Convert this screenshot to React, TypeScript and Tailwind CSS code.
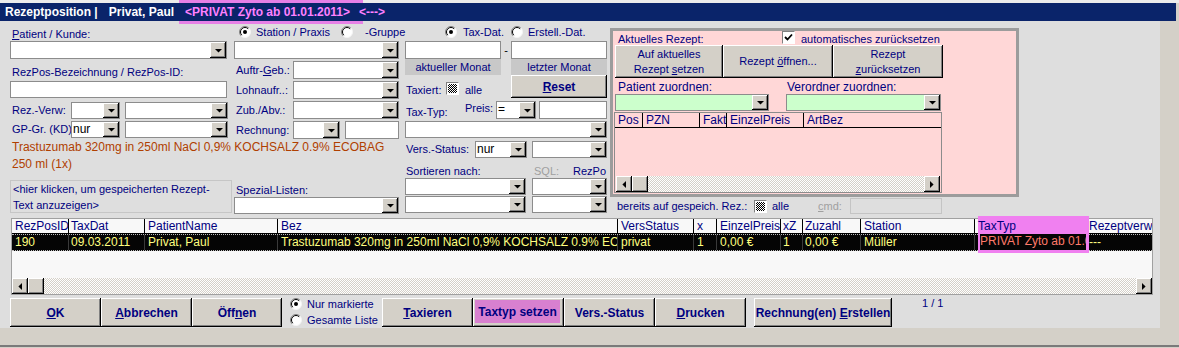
import React from 'react';

const RAISED =
  'bg-[#d4d0c8] shadow-[inset_-1px_-1px_0_#000,inset_1px_1px_0_#fff,inset_-2px_-2px_0_#808080]';
const L = 'text-[11px] leading-[13px] text-[#000080] whitespace-nowrap';

function Tri({ dir = 'down' }: { dir?: 'down' | 'left' | 'right' }) {
  if (dir === 'down')
    return (
      <svg width="7" height="4" viewBox="0 0 7 4">
        <path d="M0 0H7L3.5 3.6Z" fill="#000" />
      </svg>
    );
  if (dir === 'left')
    return (
      <svg width="4" height="7" viewBox="0 0 4 7">
        <path d="M4 0V7L0.4 3.5Z" fill="#000" />
      </svg>
    );
  return (
    <svg width="4" height="7" viewBox="0 0 4 7">
      <path d="M0 0V7L3.6 3.5Z" fill="#000" />
    </svg>
  );
}

function Combo({ cls, value, bg = 'bg-white' }: { cls: string; value?: string; bg?: string }) {
  return (
    <div className={`${cls} ${bg} shrink-0 flex border border-[#8c8c8c]`}>
      <div className="flex-1 min-w-0 overflow-hidden whitespace-nowrap text-[12px] leading-[15px] text-black pl-[1px]">
        {value}
      </div>
      <div className={`w-[16px] h-full shrink-0 flex items-center justify-center pt-[1px] ${RAISED}`}>
        <Tri />
      </div>
    </div>
  );
}

function Input({ cls }: { cls: string }) {
  return <div className={`${cls} shrink-0 bg-white border border-[#8c8c8c]`} />;
}

function Radio({ checked }: { checked?: boolean }) {
  return (
    <svg width="12" height="12" viewBox="0 0 12 12" className="shrink-0">
      <circle cx="6" cy="6" r="5.5" fill="#fff" />
      <path d="M2.1 9.9A5.5 5.5 0 0 1 9.9 2.1" fill="none" stroke="#808080" strokeWidth="1" />
      <path d="M2.8 9.2A4.5 4.5 0 0 1 9.2 2.8" fill="none" stroke="#000" strokeWidth="1" />
      <path d="M9.9 2.1A5.5 5.5 0 0 1 2.1 9.9" fill="none" stroke="#f4f4f4" strokeWidth="1" />
      {checked && <circle cx="6" cy="6" r="2" fill="#000" />}
    </svg>
  );
}

function Dither() {
  return (
    <div className="w-[13px] h-[13px] shrink-0 border border-[#808080] border-r-white border-b-white bg-white p-[1px]">
      <div className="w-full h-full bg-[repeating-conic-gradient(#000_0%_25%,#fff_0%_50%)] bg-[length:2px_2px]" />
    </div>
  );
}

function Checked() {
  return (
    <div className="w-[13px] h-[13px] shrink-0 border border-[#808080] border-r-white border-b-white bg-white flex items-center justify-center">
      <svg width="9" height="9" viewBox="0 0 9 9">
        <path d="M1 4L3.5 6.5L8 1.5" fill="none" stroke="#000" strokeWidth="1.8" />
      </svg>
    </div>
  );
}

function Btn({ cls, children }: { cls: string; children: React.ReactNode }) {
  return (
    <div className={`${cls} shrink-0 flex items-center justify-center text-center text-[#000080] ${RAISED}`}>
      {children}
    </div>
  );
}

function HScroll({ cls }: { cls: string }) {
  return (
    <div className={`${cls} flex h-[16px] bg-[repeating-conic-gradient(#d4d0c8_0%_25%,#ffffff_0%_50%)] bg-[length:2px_2px]`}>
      <div className={`w-[16px] h-full flex items-center justify-center ${RAISED}`}>
        <Tri dir="left" />
      </div>
      <div className={`w-[16px] h-full ${RAISED}`} />
      <div className="flex-1" />
      <div className={`w-[16px] h-full flex items-center justify-center ${RAISED}`}>
        <Tri dir="right" />
      </div>
    </div>
  );
}

const gridCols = [
  { h: 'RezPosID', w: 'w-[57px] pl-[3px]', v: '190' },
  { h: 'TaxDat', w: 'w-[76px] pl-[2px]', v: '09.03.2011' },
  { h: 'PatientName', w: 'w-[133px] pl-[3px]', v: 'Privat, Paul' },
  { h: 'Bez', w: 'w-[340px] pl-[3px]', v: 'Trastuzumab 320mg in 250ml NaCl 0,9% KOCHSALZ 0.9% ECOBAG 250 ml (1x)' },
  { h: 'VersStatus', w: 'w-[76px] pl-[3px]', v: 'privat' },
  { h: 'x', w: 'w-[23px] pl-[3px]', v: '1' },
  { h: 'EinzelPreis', w: 'w-[64px] pl-[3px]', v: '0,00 €' },
  { h: 'xZ', w: 'w-[22px] pl-[2px]', v: '1' },
  { h: 'Zuzahl', w: 'w-[58px] pl-[2px]', v: '0,00 €' },
  { h: 'Station', w: 'w-[114px] pl-[3px]', v: 'Müller' },
  { h: '', w: 'w-[113px]', v: '' },
  { h: 'Rezeptverweis', w: 'flex-1 pl-[1px]', v: '---' },
];

export default function App() {
  return (
    <div className="relative w-[1179px] h-[348px] overflow-hidden bg-[#d4d0c8] font-['Liberation_Sans',Arial,sans-serif]">
      {/* title highlight */}
      <div className="absolute left-[179px] top-0 w-[184px] h-[24px] bg-[#e680e6] z-[1]" />
      <div className="h-[3px] bg-[#ececec]" />
      <div className="relative z-[2] h-[18px] w-[1176px] bg-[#0a246a] flex items-center text-[12px] leading-[18px] font-bold whitespace-nowrap">
        <span className="ml-[5px] text-white">Rezeptposition |</span>
        <span className="ml-[11px] text-white">Privat, Paul</span>
        <span className="ml-[11px] text-[#ff80ff]">&lt;PRIVAT Zyto ab 01.01.2011&gt;</span>
        <span className="ml-[9px] text-[#ff80ff]">&lt;---&gt;</span>
      </div>

      <div className="flex h-[307px]">
        <div className="w-[1160px] bg-[#dedede] flex flex-col pt-[5px]">
          {/* top section */}
          <div className="h-[192px] flex">
            {/* left section */}
            <div className="ml-[10px] w-[389px] flex flex-col">
              <div className="flex">
                {/* col A */}
                <div className="w-[218px] flex flex-col">
                  <div className={`h-[15px] pt-[2px] pl-[2px] ${L}`}>
                    <u>P</u>atient / Kunde:
                  </div>
                  <Combo cls="w-[217px] h-[18px]" />
                  <div className={`h-[22px] pt-[7px] pl-[2px] ${L}`}>RezPos-Bezeichnung / RezPos-ID:</div>
                  <Input cls="w-[217px] h-[17px]" />
                  <div className="mt-[4px] h-[17px] flex items-center">
                    <span className={`w-[61px] pl-[2px] ${L}`}>Rez.-Verw:</span>
                    <Combo cls="w-[49px] h-[17px]" />
                    <Combo cls="ml-[5px] w-[103px] h-[17px]" />
                  </div>
                  <div className="mt-[2px] h-[17px] flex items-center">
                    <span className={`w-[61px] pl-[2px] ${L}`}>GP-Gr. (KD)</span>
                    <Combo cls="w-[49px] h-[17px]" value="nur" />
                    <Combo cls="ml-[5px] w-[103px] h-[17px]" />
                  </div>
                </div>
                {/* col B */}
                <div className="ml-[6px] w-[165px] flex flex-col">
                  <div className="h-[15px] flex items-start pl-[5px]">
                    <Radio checked />
                    <span className={`ml-[5px] ${L}`}>Station / Praxis</span>
                    <span className="ml-[11px]">
                      <Radio />
                    </span>
                    <span className={`ml-[12px] ${L}`}>-Gruppe</span>
                  </div>
                  <Combo cls="w-[165px] h-[18px]" />
                  <div className="mt-[2px] h-[18px] flex items-center">
                    <span className={`w-[59px] pl-[2px] ${L}`}>
                      Auftr-<u>G</u>eb.:
                    </span>
                    <Combo cls="w-[106px] h-[18px]" />
                  </div>
                  <div className="mt-[2px] h-[18px] flex items-center">
                    <span className={`w-[59px] pl-[2px] ${L}`}>Lohnaufr..:</span>
                    <Combo cls="w-[106px] h-[18px]" />
                  </div>
                  <div className="mt-[2px] h-[18px] flex items-center">
                    <span className={`w-[59px] pl-[2px] ${L}`}>Zub./Abv.:</span>
                    <Combo cls="w-[106px] h-[18px]" />
                  </div>
                  <div className="mt-[2px] h-[18px] flex items-center">
                    <span className={`w-[59px] pl-[2px] ${L}`}>Rechnung:</span>
                    <Combo cls="w-[47px] h-[18px]" />
                    <Input cls="ml-[5px] w-[54px] h-[18px]" />
                  </div>
                </div>
              </div>
              <div className="pl-[2px] text-[12px] leading-[17px] text-[#b04000] whitespace-nowrap">
                Trastuzumab 320mg in 250ml NaCl 0,9% KOCHSALZ 0.9% ECOBAG
                <br />
                250 ml (1x)
              </div>
              <div className="mt-[7px] flex">
                <div className="w-[222px] h-[33px] border border-[#c6c6c6] pl-[2px] text-[11px] leading-[16px] text-[#000080] whitespace-nowrap">
                  &lt;hier klicken, um gespeicherten Rezept-
                  <br />
                  Text anzuzeigen&gt;
                </div>
                <div className="ml-[2px] w-[165px] flex flex-col">
                  <div className={`h-[17px] pt-[4px] pl-[2px] ${L}`}>Spezial-Listen:</div>
                  <Combo cls="w-[165px] h-[17px]" />
                </div>
              </div>
            </div>

            {/* col C */}
            <div className="ml-[6px] w-[202px] flex flex-col">
              <div className="h-[15px] flex items-start">
                <div className="w-[106px] pl-[40px] flex items-start">
                  <Radio checked />
                  <span className={`ml-[6px] ${L}`}>Tax-Dat.</span>
                </div>
                <Radio />
                <span className={`ml-[5px] ${L}`}>Erstell.-Dat.</span>
              </div>
              <div className="h-[18px] flex items-center">
                <Input cls="w-[96px] h-[18px]" />
                <span className="w-[10px] text-center text-[11px] text-black">-</span>
                <Input cls="w-[96px] h-[18px]" />
              </div>
              <div className="h-[39px] flex">
                <div className="w-[96px] flex flex-col">
                  <div className="h-[16px] bg-[#c8c8c8] text-center text-[11px] leading-[16px] text-[#000080]">
                    aktueller Monat
                  </div>
                  <div className="mt-[6px] h-[15px] flex items-center">
                    <span className={`w-[41px] pl-[1px] pt-[3px] ${L}`}>Taxiert:</span>
                    <Dither />
                    <span className={`ml-[6px] pt-[3px] ${L}`}>alle</span>
                  </div>
                </div>
                <div className="ml-[10px] w-[96px] flex flex-col">
                  <div className="h-[16px] bg-[#c8c8c8] text-center text-[11px] leading-[16px] text-[#000080]">
                    letzter Monat
                  </div>
                  <Btn cls="w-[96px] h-[23px] text-[12px] font-bold">
                    <span>
                      <u>R</u>eset
                    </span>
                  </Btn>
                </div>
              </div>
              <div className="mt-[3px] h-[18px] flex">
                <div className={`w-[60px] h-full flex items-end pl-[1px] ${L}`}>
                  <span className="pb-[0px]">Tax-Typ:</span>
                </div>
                <div className={`w-[31px] pt-[1px] ${L}`}>Preis:</div>
                <Combo cls="w-[40px] h-[18px]" value="=" />
                <Input cls="ml-[3px] w-[68px] h-[18px]" />
              </div>
              <Combo cls="mt-[2px] w-[202px] h-[17px]" />
              <div className="mt-[3px] h-[17px] flex items-center">
                <span className={`w-[70px] pl-[1px] ${L}`}>Vers.-Status:</span>
                <Combo cls="w-[52px] h-[17px]" value="nur" />
                <Combo cls="ml-[5px] w-[75px] h-[17px]" />
              </div>
              <div className="h-[20px] flex items-end">
                <span className={`w-[129px] pl-[1px] ${L}`}>Sortieren nach:</span>
                <span className="w-[39px] text-[11px] leading-[13px] text-[#a0a0a0]">SQL:</span>
                <span className={L}>RezPo</span>
              </div>
              <div className="h-[17px] flex">
                <Combo cls="w-[121px] h-[17px]" />
                <Combo cls="ml-[6px] w-[75px] h-[17px]" />
              </div>
              <div className="mt-[1px] h-[17px] flex">
                <Combo cls="w-[121px] h-[17px]" />
                <Combo cls="ml-[6px] w-[75px] h-[17px]" />
              </div>
            </div>

            {/* col D */}
            <div className="ml-[3px] w-[409px] pt-[2px] flex flex-col">
              <div className="w-[409px] h-[169px] border-[3px] border-[#9c9c9c] bg-[#ffd7d7] flex flex-col">
                <div className="h-[14px] flex items-start">
                  <span className={`w-[169px] pl-[5px] pt-[2px] ${L}`}>Aktuelles Rezept:</span>
                  <Checked />
                  <span className={`ml-[6px] pt-[2px] ${L}`}>automatisches zurücksetzen</span>
                </div>
                <div className="ml-[2px] h-[33px] flex">
                  <Btn cls="w-[108px] h-[33px] text-[11px] leading-[15px]">
                    <span>
                      Auf aktuelles
                      <br />
                      Rezept <u>s</u>etzen
                    </span>
                  </Btn>
                  <Btn cls="w-[110px] h-[33px] text-[11px] leading-[15px]">
                    <span>
                      Rezept <u>ö</u>ffnen...
                    </span>
                  </Btn>
                  <Btn cls="w-[110px] h-[33px] text-[11px] leading-[15px]">
                    <span>
                      Rezept
                      <br />
                      <u>z</u>urücksetzen
                    </span>
                  </Btn>
                </div>
                <div className="h-[16px] pt-[3px] flex text-[12px] leading-[13px] text-[#000080] whitespace-nowrap">
                  <span className="w-[174px] pl-[5px]">Patient zuordnen:</span>
                  <span>Verordner zuordnen:</span>
                </div>
                <div className="ml-[2px] h-[17px] flex">
                  <Combo cls="w-[154px] h-[17px]" bg="bg-[#ccffcc]" />
                  <Combo cls="ml-[17px] w-[155px] h-[17px]" bg="bg-[#ccffcc]" />
                </div>
                <div className="mt-[1px] ml-[1px] w-[328px] h-[81px] border border-[#8c8c8c] flex flex-col">
                  <div className="h-[15px] flex border-b border-black text-[12px] leading-[14px] text-[#000080] whitespace-nowrap">
                    <div className="w-[28px] pl-[3px] border-r border-black overflow-hidden">Pos</div>
                    <div className="w-[57px] pl-[3px] border-r border-black overflow-hidden">PZN</div>
                    <div className="w-[27px] pl-[3px] border-r border-black overflow-hidden">Faktor</div>
                    <div className="w-[77px] pl-[3px] border-r border-black overflow-hidden">EinzelPreis</div>
                    <div className="flex-1 pl-[3px] overflow-hidden">ArtBez</div>
                  </div>
                  <div className="flex-1" />
                  <HScroll cls="mx-[1px] mb-[0px]" />
                </div>
              </div>
              <div className="h-[18px] flex items-center">
                <span className={`w-[144px] pl-[7px] pt-[1px] ${L}`}>bereits auf gespeich. Rez.:</span>
                <Dither />
                <span className={`ml-[5px] w-[46px] pt-[1px] ${L}`}>alle</span>
                <span className="w-[32px] pt-[1px] text-[11px] leading-[13px] text-[#a0a0a0]">
                  <u>c</u>md:
                </span>
                <div className="w-[92px] h-[16px] border border-[#c4c4c4] bg-[#dedede]" />
              </div>
            </div>
          </div>

          {/* main grid */}
          <div className="relative ml-[11px] w-[1142px] h-[77px] border border-[#a0a0a0] bg-[#f8f8f8] flex flex-col">
            <div className="h-[15px] flex border-b border-black text-[12px] leading-[15px] text-[#000080] whitespace-nowrap">
              {gridCols.map((c, i) => (
                <div key={i} className={`${c.w} shrink-0 overflow-hidden ${i < gridCols.length - 1 ? 'border-r border-black' : ''}`}>
                  {c.h}
                </div>
              ))}
            </div>
            <div className="h-[17px] flex bg-[#050505] border-y border-dotted border-[#bdbdbd] text-[12px] leading-[15px] text-[#ffff80] whitespace-nowrap">
              {gridCols.map((c, i) => (
                <div key={i} className={`${c.w} shrink-0 overflow-hidden ${i < gridCols.length - 1 ? 'border-r border-[#3a3a3a]' : ''}`}>
                  {c.v}
                </div>
              ))}
            </div>
            <div className="flex-1" />
            <HScroll cls="" />
            {/* TaxTyp highlight */}
            <div className="absolute left-[966px] top-[-3px] w-[111px] h-[37px] flex flex-col z-[1]">
              <div className="h-[18px] bg-[#f080f0] pt-[3px] pl-[0px] text-[12px] leading-[15px] text-[#000080] whitespace-nowrap">
                TaxTyp
              </div>
              <div className="h-[19px] border-l-[2px] border-r-[3px] border-b-[3px] border-[#f080f0] bg-[#050505] text-[12px] leading-[15px] text-[#ff7a6a] whitespace-nowrap overflow-hidden">
                PRIVAT Zyto ab 01.01.2011
              </div>
            </div>
          </div>

          {/* bottom buttons */}
          <div className="mt-[3px] ml-[10px] h-[30px] flex items-start text-[12px] font-bold">
            <Btn cls="w-[91px] h-[29px]">
              <span>
                <u>O</u>K
              </span>
            </Btn>
            <Btn cls="w-[91px] h-[29px]">
              <span>
                <u>A</u>bbrechen
              </span>
            </Btn>
            <Btn cls="w-[90px] h-[29px]">
              <span>
                Öff<u>n</u>en
              </span>
            </Btn>
            <div className="w-[100px] h-[29px] flex flex-col font-normal">
              <div className="h-[12px] pl-[8px] flex items-center">
                <Radio checked />
                <span className={`ml-[5px] ${L}`}>Nur markierte</span>
              </div>
              <div className="mt-[4px] h-[12px] pl-[8px] flex items-center">
                <Radio />
                <span className={`ml-[5px] ${L}`}>Gesamte Liste</span>
              </div>
            </div>
            <Btn cls="w-[91px] h-[29px]">
              <span>
                <u>T</u>axieren
              </span>
            </Btn>
            <Btn cls="w-[91px] h-[29px] pl-[2px] pt-[2px] pr-[4px] pb-[4px]">
              <div className="w-full h-full bg-[#d880d0] flex items-center justify-center">Taxtyp setzen</div>
            </Btn>
            <Btn cls="w-[91px] h-[29px]">
              <span>Vers.-Status</span>
            </Btn>
            <Btn cls="w-[91px] h-[29px]">
              <span>
                <u>D</u>rucken
              </span>
            </Btn>
            <Btn cls="ml-[8px] w-[138px] h-[29px]">
              <span>
                Rechnung(en) <u>E</u>rstellen
              </span>
            </Btn>
            <span className="ml-[30px] mt-[-1px] text-[11px] leading-[13px] font-normal text-[#000080]">1 / 1</span>
          </div>
        </div>
        <div className="flex-1" />
      </div>
      <div className="h-[17px]" />
      <div className="h-[2px] bg-[#7a7a7a]" />
    </div>
  );
}
